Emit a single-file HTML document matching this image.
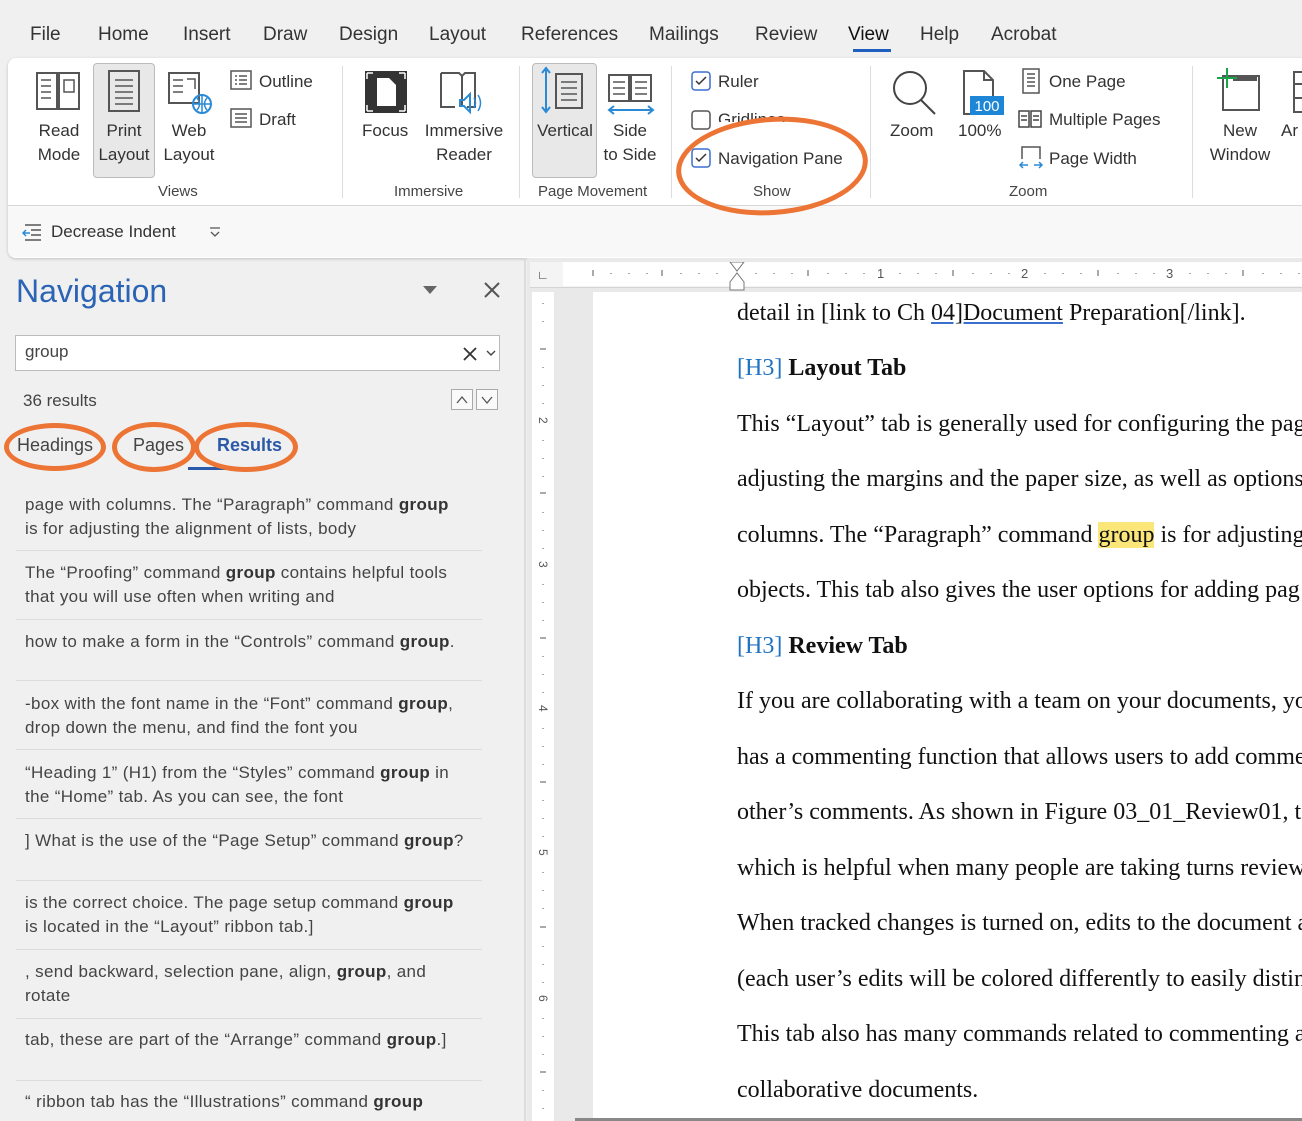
<!DOCTYPE html>
<html><head><meta charset="utf-8"><style>
*{margin:0;padding:0;box-sizing:border-box}
body{width:1302px;height:1121px;overflow:hidden;background:#f0f0f0;font-family:"Liberation Sans",sans-serif;position:relative;color:#333}
.a{position:absolute;white-space:nowrap}
.tab{font-size:19px;color:#333;top:24px}
.rb{font-size:17px;color:#333;text-align:center;line-height:24px}
.gl{font-size:15px;color:#444;top:183px}
.nr{font-size:17px;letter-spacing:0.35px;color:#444;left:25px;line-height:24px}
.nr b{color:#333}
.sep{position:absolute;left:16px;width:466px;height:1px;background:#dcdcdc}
.d{font-family:"Liberation Serif",serif;font-size:24px;color:#111;left:737px;line-height:28px}
.ov{position:absolute;border:5px solid #ec7434;border-radius:50%}
svg{position:absolute}
</style></head><body>
<!-- tab bar -->
<div class="a tab" style="left:30px">File</div>
<div class="a tab" style="left:98px">Home</div>
<div class="a tab" style="left:183px">Insert</div>
<div class="a tab" style="left:263px">Draw</div>
<div class="a tab" style="left:339px">Design</div>
<div class="a tab" style="left:429px">Layout</div>
<div class="a tab" style="left:521px">References</div>
<div class="a tab" style="left:649px">Mailings</div>
<div class="a tab" style="left:755px">Review</div>
<div class="a tab" style="left:848px;color:#111">View</div>
<div class="a" style="left:853px;top:49px;width:38px;height:3px;background:#1f5fbf"></div>
<div class="a tab" style="left:920px">Help</div>
<div class="a tab" style="left:991px">Acrobat</div>
<!-- ribbon -->
<div class="a" style="left:8px;top:58px;width:1300px;height:200px;background:#fff;border-radius:8px;box-shadow:0 1px 3px rgba(0,0,0,.2)"></div>
<div class="a" style="left:8px;top:205px;width:1300px;height:1px;background:#d8d8d8"></div>
<div class="a" style="left:8px;top:206px;width:1300px;height:51px;background:#f8f8f8;border-radius:0 0 8px 8px"></div>
<div class="a" style="left:93px;top:63px;width:62px;height:115px;background:#e8e8e8;border:1px solid #bbb;border-radius:4px"></div>
<div class="a" style="left:532px;top:63px;width:65px;height:115px;background:#e8e8e8;border:1px solid #bbb;border-radius:4px"></div>
<div class="a" style="left:342px;top:66px;width:1px;height:132px;background:#ddd"></div>
<div class="a" style="left:519px;top:66px;width:1px;height:132px;background:#ddd"></div>
<div class="a" style="left:671px;top:66px;width:1px;height:132px;background:#ddd"></div>
<div class="a" style="left:870px;top:66px;width:1px;height:132px;background:#ddd"></div>
<div class="a" style="left:1192px;top:66px;width:1px;height:132px;background:#ddd"></div>
<!-- icons -->
<svg style="left:34px;top:70px" width="50" height="42" viewBox="0 0 50 42" fill="none" stroke="#555" stroke-width="2"><path d="M3 3h20v36H3zM25 3h20v36H25z"/><path d="M7 10h10M7 16h10M7 22h10M7 28h10M30 10h10v12H30z" stroke-width="1.5"/></svg>
<svg style="left:106px;top:68px" width="36" height="46" viewBox="0 0 36 46" fill="none" stroke="#555" stroke-width="2"><rect x="3" y="3" width="30" height="40"/><path d="M9 12h18M9 18h18M9 24h18M9 30h18M9 36h18" stroke-width="1.5"/></svg>
<svg style="left:166px;top:70px" width="48" height="46" viewBox="0 0 48 46" fill="none" stroke="#555" stroke-width="2"><path d="M3 3h30v30H3z"/><path d="M7 10h10M7 16h10M7 22h10M21 9h8v10" stroke-width="1.5"/><circle cx="36" cy="34" r="9" stroke="#2a8ad6"/><path d="M27 34h18M36 25v18M31 28q5 6 0 12M41 28q-5 6 0 12" stroke="#2a8ad6" stroke-width="1.5"/></svg>
<svg style="left:230px;top:70px" width="22" height="20" viewBox="0 0 22 20" fill="none" stroke="#555" stroke-width="1.5"><rect x="1" y="1" width="20" height="18"/><path d="M5 6h2M9 6h8M5 10h2M9 10h8M5 14h2M9 14h8"/></svg>
<div class="a rb" style="left:259px;top:70px">Outline</div>
<svg style="left:230px;top:108px" width="22" height="20" viewBox="0 0 22 20" fill="none" stroke="#555" stroke-width="1.5"><rect x="1" y="1" width="20" height="18"/><path d="M5 6h12M5 10h12M5 14h12"/></svg>
<div class="a rb" style="left:259px;top:108px">Draft</div>
<div class="a rb" style="left:34px;top:119px;width:50px">Read<br>Mode</div>
<div class="a rb" style="left:94px;top:119px;width:60px">Print<br>Layout</div>
<div class="a rb" style="left:162px;top:119px;width:54px">Web<br>Layout</div>
<div class="a gl" style="left:158px">Views</div>
<svg style="left:364px;top:70px" width="44" height="44" viewBox="0 0 44 44"><rect x="1" y="1" width="42" height="42" fill="#333"/><path d="M13 8h12l7 7v21H13z" fill="#fff"/><path d="M3 3v6M3 3h6M41 3v6M41 3h-6M3 41v-6M3 41h6M41 41v-6M41 41h-6" stroke="#fff" stroke-width="1.5"/></svg>
<div class="a rb" style="left:362px;top:119px">Focus</div>
<svg style="left:438px;top:70px" width="52" height="46" viewBox="0 0 52 46" fill="none" stroke="#555" stroke-width="2"><path d="M3 3h18l3 3 3-3h10v34h-8M24 6v30M3 3v34h14"/><path d="M22 30h4l6-6v18l-6-6h-4z" stroke="#2a8ad6"/><path d="M36 28q3 5 0 10M40 25q5 8 0 16" stroke="#2a8ad6" stroke-width="1.5"/></svg>
<div class="a rb" style="left:422px;top:119px;width:84px">Immersive<br>Reader</div>
<div class="a gl" style="left:394px">Immersive</div>
<svg style="left:536px;top:64px" width="50" height="52" viewBox="0 0 50 52" fill="none" stroke-width="2"><path d="M10 4v44M6 9l4-5 4 5M6 43l4 5 4-5" stroke="#2a8ad6"/><rect x="20" y="10" width="26" height="34" stroke="#555"/><path d="M25 18h16M25 24h16M25 30h16M25 36h16" stroke="#555" stroke-width="1.5"/></svg>
<div class="a rb" style="left:533px;top:119px;width:64px">Vertical</div>
<svg style="left:606px;top:72px" width="50" height="46" viewBox="0 0 50 46" fill="none" stroke-width="2"><path d="M3 3h20v26H3zM25 3h20v26H25z" stroke="#555"/><path d="M7 10h12M7 16h12M7 22h12M29 10h12M29 16h12M29 22h12" stroke="#555" stroke-width="1.5"/><path d="M3 38h44M8 34l-5 4 5 4M42 34l5 4-5 4" stroke="#2a8ad6"/></svg>
<div class="a rb" style="left:600px;top:119px;width:60px">Side<br>to Side</div>
<div class="a gl" style="left:538px">Page Movement</div>
<svg style="left:691px;top:71px" width="20" height="20" viewBox="0 0 20 20" fill="none"><rect x="1" y="1" width="18" height="18" rx="3" stroke="#3b6fcf" stroke-width="1.5"/><path d="M5 10l3 3 7-7" stroke="#333" stroke-width="1.5"/></svg>
<div class="a rb" style="left:718px;top:70px">Ruler</div>
<svg style="left:691px;top:110px" width="20" height="20" viewBox="0 0 20 20" fill="none"><rect x="1" y="1" width="18" height="18" rx="3" stroke="#555" stroke-width="1.5"/></svg>
<div class="a rb" style="left:718px;top:108px;height:14px;overflow:hidden">Gridlines</div>
<svg style="left:691px;top:148px" width="20" height="20" viewBox="0 0 20 20" fill="none"><rect x="1" y="1" width="18" height="18" rx="3" stroke="#3b6fcf" stroke-width="1.5"/><path d="M5 10l3 3 7-7" stroke="#333" stroke-width="1.5"/></svg>
<div class="a rb" style="left:718px;top:147px">Navigation Pane</div>
<div class="a gl" style="left:753px">Show</div>
<div class="ov" style="left:676px;top:117px;width:192px;height:98px;transform:rotate(-4deg)"></div>
<svg style="left:890px;top:68px" width="50" height="50" viewBox="0 0 50 50" fill="none" stroke="#444" stroke-width="2"><circle cx="20" cy="20" r="16"/><path d="M31 32l14 14"/></svg>
<div class="a rb" style="left:890px;top:119px">Zoom</div>
<svg style="left:958px;top:68px" width="48" height="48" viewBox="0 0 48 48" fill="none"><path d="M6 3h20l9 9v34H6z" stroke="#555" stroke-width="2"/><path d="M26 3v9h9" stroke="#555" stroke-width="2"/><rect x="12" y="28" width="34" height="19" fill="#1d86d6"/><text x="29" y="43" font-size="15" fill="#fff" text-anchor="middle" font-family="Liberation Sans">100</text></svg>
<div class="a rb" style="left:958px;top:119px">100%</div>
<svg style="left:1021px;top:68px" width="20" height="26" viewBox="0 0 20 26" fill="none" stroke="#555" stroke-width="1.5"><rect x="2" y="1" width="16" height="24"/><path d="M6 6h8M6 10h8M6 14h8M6 18h8"/></svg>
<div class="a rb" style="left:1049px;top:70px">One Page</div>
<svg style="left:1018px;top:110px" width="24" height="18" viewBox="0 0 24 18" fill="none" stroke="#444" stroke-width="1.5"><rect x="1" y="1" width="10" height="16"/><rect x="13" y="1" width="10" height="16"/><path d="M3 6h6M3 10h6M15 6h6M15 10h6"/></svg>
<div class="a rb" style="left:1049px;top:108px">Multiple Pages</div>
<svg style="left:1018px;top:145px" width="26" height="24" viewBox="0 0 26 24" fill="none" stroke-width="1.5"><path d="M4 14V2h18v12" stroke="#555"/><path d="M2 20h8M5 17l-3 3 3 3M16 20h8M21 17l3 3-3 3" stroke="#2a8ad6"/></svg>
<div class="a rb" style="left:1049px;top:147px">Page Width</div>
<div class="a gl" style="left:1009px">Zoom</div>
<svg style="left:1213px;top:66px" width="52" height="46" viewBox="0 0 52 46" fill="none" stroke-width="2"><path d="M10 10h36v34H10z" stroke="#555"/><path d="M20 13h24" stroke="#555" stroke-width="4"/><path d="M14 2v20M4 12h20" stroke="#1aa34a"/></svg>
<div class="a rb" style="left:1205px;top:119px;width:70px">New<br>Window</div>
<svg style="left:1290px;top:70px" width="12" height="44" viewBox="0 0 12 44" fill="none" stroke="#555" stroke-width="2"><path d="M4 2h10v40H4zM4 14h10M4 28h10"/></svg>
<div class="a rb" style="left:1281px;top:119px">Ar</div>
<svg style="left:21px;top:223px" width="22" height="20" viewBox="0 0 22 20" fill="none" stroke-width="1.5"><path d="M4 2h16M10 7h10M10 12h10M4 17h16" stroke="#555"/><path d="M2 10h7M5 7l-3 3 3 3" stroke="#2a8ad6"/></svg>
<div class="a" style="left:51px;top:222px;font-size:17px;color:#333">Decrease Indent</div>
<svg style="left:208px;top:226px" width="14" height="12" viewBox="0 0 14 12" fill="none" stroke="#555" stroke-width="1.3"><path d="M2 2h10M3 6l4 4 4-4"/></svg>
<!-- nav pane -->
<div class="a" style="left:524px;top:258px;width:2px;height:863px;background:#dcdcdc"></div>
<div class="a" style="left:16px;top:273px;font-size:32px;color:#2b63b5">Navigation</div>
<svg style="left:422px;top:285px" width="16" height="10" viewBox="0 0 16 10"><path d="M1 1h14l-7 8z" fill="#666"/></svg>
<svg style="left:483px;top:281px" width="18" height="18" viewBox="0 0 18 18" stroke="#555" stroke-width="2"><path d="M2 2l14 14M16 2L2 16"/></svg>
<div class="a" style="left:15px;top:335px;width:485px;height:36px;background:#fff;border:1px solid #bbb"></div>
<div class="a" style="left:25px;top:342px;font-size:17px;color:#444">group</div>
<svg style="left:462px;top:346px" width="16" height="16" viewBox="0 0 16 16" stroke="#333" stroke-width="1.8"><path d="M2 2l12 12M14 2L2 14"/></svg>
<svg style="left:486px;top:350px" width="10" height="7" viewBox="0 0 10 7" fill="none" stroke="#444" stroke-width="1.4"><path d="M1 1l4 4 4-4"/></svg>
<div class="a" style="left:23px;top:391px;font-size:17px;color:#444">36 results</div>
<div class="a" style="left:451px;top:389px;width:22px;height:21px;border:1px solid #aaa;background:#fafafa"></div>
<div class="a" style="left:476px;top:389px;width:22px;height:21px;border:1px solid #aaa;background:#fafafa"></div>
<svg style="left:455px;top:394px" width="40" height="12" viewBox="0 0 40 12" fill="none" stroke="#555" stroke-width="1.3"><path d="M2 9l5-6 5 6M27 3l5 6 5-6"/></svg>
<div class="a" style="left:17px;top:435px;font-size:18px;color:#444">Headings</div>
<div class="a" style="left:133px;top:435px;font-size:18px;color:#444">Pages</div>
<div class="a" style="left:217px;top:435px;font-size:18px;color:#2b59a8;font-weight:bold">Results</div>
<div class="a" style="left:188px;top:467px;width:56px;height:3px;background:#2b59a8"></div>
<div class="ov" style="left:4px;top:423px;width:102px;height:48px"></div>
<div class="ov" style="left:112px;top:422px;width:84px;height:50px"></div>
<div class="ov" style="left:194px;top:422px;width:104px;height:50px"></div>
<div class="a nr" style="top:493px">page with columns. The “Paragraph” command <b>group</b><br>is for adjusting the alignment of lists, body</div>
<div class="sep" style="top:550px"></div>
<div class="a nr" style="top:561px">The “Proofing” command <b>group</b> contains helpful tools<br>that you will use often when writing and</div>
<div class="sep" style="top:619px"></div>
<div class="a nr" style="top:630px">how to make a form in the “Controls” command <b>group</b>.</div>
<div class="sep" style="top:680px"></div>
<div class="a nr" style="top:692px">-box with the font name in the “Font” command <b>group</b>,<br>drop down the menu, and find the font you</div>
<div class="sep" style="top:749px"></div>
<div class="a nr" style="top:761px">“Heading 1” (H1) from the “Styles” command <b>group</b> in<br>the “Home” tab. As you can see, the font</div>
<div class="sep" style="top:818px"></div>
<div class="a nr" style="top:829px">] What is the use of the “Page Setup” command <b>group</b>?</div>
<div class="sep" style="top:880px"></div>
<div class="a nr" style="top:891px">is the correct choice. The page setup command <b>group</b><br>is located in the “Layout” ribbon tab.]</div>
<div class="sep" style="top:949px"></div>
<div class="a nr" style="top:960px">, send backward, selection pane, align, <b>group</b>, and<br>rotate</div>
<div class="sep" style="top:1018px"></div>
<div class="a nr" style="top:1028px">tab, these are part of the “Arrange” command <b>group</b>.]</div>
<div class="sep" style="top:1080px"></div>
<div class="a nr" style="top:1090px">“ ribbon tab has the “Illustrations” command <b>group</b></div>
<!-- document area -->
<div class="a" style="left:527px;top:258px;width:775px;height:863px;background:#e9e9e9"></div>
<div class="a" style="left:530px;top:262px;width:772px;height:26px;background:#f4f4f4;border-bottom:1px solid #d4d4d4"></div>
<div class="a" style="left:563px;top:262px;width:739px;height:24px;background:#fff"></div>
<div class="a" style="left:537px;top:268px;font-size:12px;color:#333;font-weight:bold">∟</div>
<div class="a" style="left:532px;top:292px;width:22px;height:829px;background:#fff"></div>
<div class="a" style="left:593px;top:292px;width:709px;height:826px;background:#fff"></div>
<div class="a" style="left:575px;top:1118px;width:727px;height:3px;background:#888"></div>
<svg style="left:563px;top:262px" width="739" height="30" viewBox="0 0 739 30">
<g fill="#555" font-family="Liberation Sans" font-size="13">
<text x="314" y="16">1</text><text x="458" y="16">2</text><text x="603" y="16">3</text>
</g>
<g stroke="#555" stroke-width="1">
<path d="M30 8v6M99 8v6M245 8v6M390 8v6M535 8v6M680 8v6"/>
<path d="M48 11v1M66 11v1M84 11v1M118 11v1M136 11v1M154 11v1M193 11v1M211 11v1M229 11v1M265 11v1M283 11v1M301 11v1M337 11v1M355 11v1M373 11v1M410 11v1M428 11v1M446 11v1M482 11v1M500 11v1M518 11v1M555 11v1M573 11v1M591 11v1M627 11v1M645 11v1M663 11v1M700 11v1M718 11v1M736 11v1"/>
</g>
<path d="M167 0h14l-7 9zM167 20l7-9 7 9v8h-14z" fill="#fff" stroke="#777"/>
</svg>
<svg style="left:532px;top:292px" width="22" height="829" viewBox="0 0 22 829">
<g fill="#555">
<text x="6" y="134" font-size="12" font-family="Liberation Sans" transform="rotate(90 11 130)">2</text>
<text x="6" y="278" font-size="12" font-family="Liberation Sans" transform="rotate(90 11 274)">3</text>
<text x="6" y="422" font-size="12" font-family="Liberation Sans" transform="rotate(90 11 418)">4</text>
<text x="6" y="566" font-size="12" font-family="Liberation Sans" transform="rotate(90 11 562)">5</text>
<text x="6" y="712" font-size="12" font-family="Liberation Sans" transform="rotate(90 11 708)">6</text>
</g>
<g stroke="#555"><path d="M8 57h6M8 201h6M8 346h6M8 490h6M8 635h6M8 780h6"/>
<path d="M11 11v1M11 29v1M11 75v1M11 93v1M11 111v1M11 148v1M11 166v1M11 184v1M11 220v1M11 238v1M11 256v1M11 292v1M11 310v1M11 328v1M11 364v1M11 382v1M11 400v1M11 436v1M11 454v1M11 472v1M11 508v1M11 526v1M11 544v1M11 580v1M11 598v1M11 616v1M11 654v1M11 672v1M11 690v1M11 726v1M11 744v1M11 762v1M11 798v1M11 816v1"/></g>
</svg>
<div class="a d" style="top:299px">detail in [link to Ch <span style="text-decoration:underline;text-decoration-color:#3a6fd0">04]Document</span> Preparation[/link].</div>
<div class="a d" style="top:354px"><span style="color:#1f72c2">[H3]</span> <b>Layout Tab</b></div>
<div class="a d" style="top:410px">This “Layout” tab is generally used for configuring the page</div>
<div class="a d" style="top:465px">adjusting the margins and the paper size, as well as options</div>
<div class="a d" style="top:521px">columns. The “Paragraph” command <span style="background:#fbe67a">group</span> is for adjusting</div>
<div class="a d" style="top:576px">objects. This tab also gives the user options for adding pag</div>
<div class="a d" style="top:632px"><span style="color:#1f72c2">[H3]</span> <b>Review Tab</b></div>
<div class="a d" style="top:687px">If you are collaborating with a team on your documents, yo</div>
<div class="a d" style="top:743px">has a commenting function that allows users to add comme</div>
<div class="a d" style="top:798px">other’s comments. As shown in Figure 03_01_Review01, t</div>
<div class="a d" style="top:854px">which is helpful when many people are taking turns review</div>
<div class="a d" style="top:909px">When tracked changes is turned on, edits to the document a</div>
<div class="a d" style="top:965px">(each user’s edits will be colored differently to easily distin</div>
<div class="a d" style="top:1020px">This tab also has many commands related to commenting a</div>
<div class="a d" style="top:1076px">collaborative documents.</div>
</body></html>
